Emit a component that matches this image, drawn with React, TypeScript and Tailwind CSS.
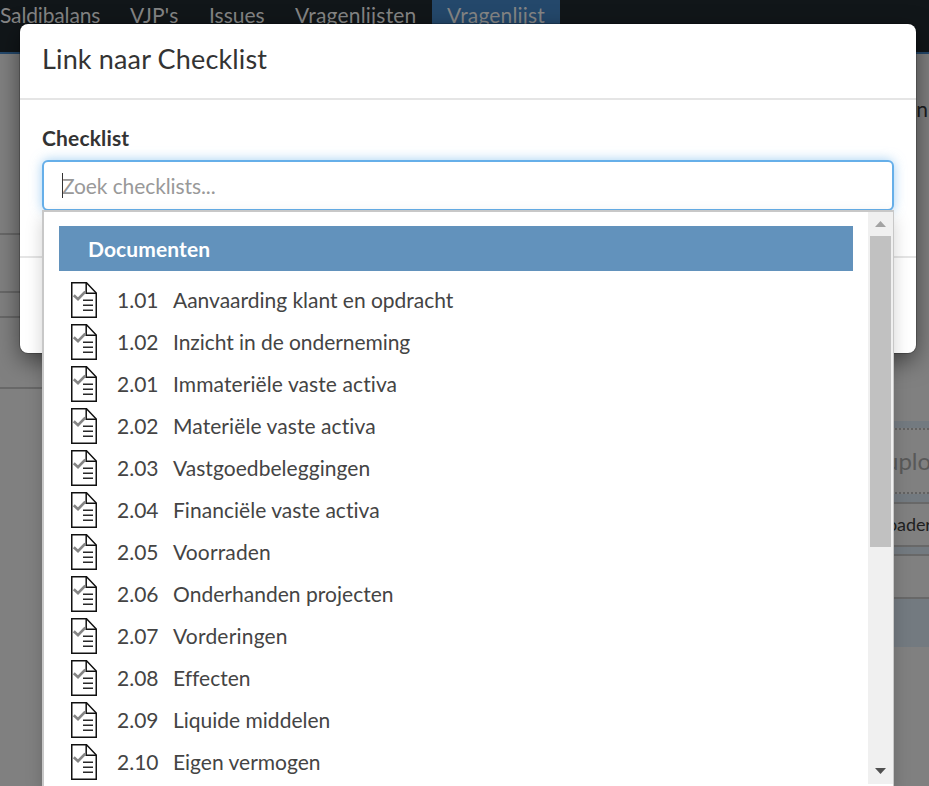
import React from "react";

const documents = [
  { number: "1.01", name: "Aanvaarding klant en opdracht", spacing: "tracking-[-0.02px]" },
  { number: "1.02", name: "Inzicht in de onderneming", spacing: "tracking-[-0.06px]" },
  { number: "2.01", name: "Immateriële vaste activa", spacing: "tracking-[0.09px]" },
  { number: "2.02", name: "Materiële vaste activa", spacing: "tracking-[0.08px]" },
  { number: "2.03", name: "Vastgoedbeleggingen", spacing: "tracking-[0.05px]" },
  { number: "2.04", name: "Financiële vaste activa", spacing: "tracking-[0.03px]" },
  { number: "2.05", name: "Voorraden", spacing: "tracking-[0.15px]" },
  { number: "2.06", name: "Onderhanden projecten", spacing: "tracking-[0.03px]" },
  { number: "2.07", name: "Vorderingen", spacing: "tracking-[0.2px]" },
  { number: "2.08", name: "Effecten", spacing: "tracking-normal" },
  { number: "2.09", name: "Liquide middelen", spacing: "tracking-normal" },
  { number: "2.10", name: "Eigen vermogen", spacing: "tracking-normal" },
];

function DocumentIcon() {
  return (
    <svg width="26" height="36" viewBox="0 0 26 36" fill="none" className="shrink-0">
      <path d="M.75 .75H15.5L25.25 11V35.25H.75Z" stroke="#111" strokeWidth="1.5" />
      <path d="M15.2 1V11.2H25" stroke="#111" strokeWidth="1.5" />
      <path d="M2.8 13.3L7 17.2L14.3 9.6" stroke="#858585" strokeWidth="2.7" />
      <path d="M12 18.3H22M12 23.3H22M12 28.3H22" stroke="#292929" strokeWidth="1.4" />
    </svg>
  );
}

function NavBar() {
  return (
    <nav className="flex h-[54px] items-start border-b-2 border-[#24486b] bg-[#111619] text-[21px] leading-[30px] text-[#858585]">
      <span className="w-[128px] whitespace-nowrap tracking-[-0.15px]">Saldibalans</span>
      <span className="w-[81px] pl-[2px] tracking-[0.2px]">VJP's</span>
      <span className="w-[86px]">Issues</span>
      <span className="w-[137px] tracking-[0.2px]">Vragenlijsten</span>
      <span className="h-[52px] w-[128px] bg-[#24486b] pl-[15px] tracking-[0.15px]">Vragenlijst</span>
    </nav>
  );
}

function Page() {
  return (
    <div className="h-full w-full">
      <NavBar />
      <div className="flex h-[732px] justify-between">
        <div className="w-[100px]">
          <div className="h-[181px] border-b-2 border-[#686868]" />
          <div className="h-[58px] border-b-2 border-[#686868]" />
          <div className="h-[25px] border-b-2 border-[#686868]" />
          <div className="h-[71px] border-b-2 border-[#686868]" />
        </div>
        <div className="w-[49px]">
          <div className="flex h-[367px] justify-end pt-[39px] pr-[1px] text-[21px] leading-8 text-[#1b1c1e]">on</div>
          <div className="h-[226px] bg-[#737a80] pt-[7px]">
            <div className="flex h-[66px] items-center border-y-2 border-dotted border-[#626262] bg-[#808080] pl-[5px] text-[24px] text-[#595959]">uplo</div>
            <div className="mt-[8px] flex h-[45px] items-center border-y-2 border-[#686868] bg-[#808080] pl-[7px] text-[18px] tracking-[-0.1px] text-[#202020]">oader</div>
            <div className="mt-[7px] h-[45px] border-y-2 border-[#686868] bg-[#808080]" />
          </div>
        </div>
      </div>
    </div>
  );
}

function Modal() {
  return (
    <section className="absolute left-5 top-6 h-[329px] w-[896px] rounded-[8px] bg-white shadow-[0_8px_23px_rgba(0,0,0,0.5),0_0_0_1px_rgba(0,0,0,0.2)]">
      <header className="h-[76px] border-b-2 border-[#e5e5e5] px-[22px] pt-[15px] text-[27px] leading-[39px] tracking-[0.15px]">Link naar Checklist</header>
      <div className="h-[158px] border-b-2 border-[#e5e5e5] px-[22px] pt-[23px]">
        <label htmlFor="checklist" className="block h-[37px] text-[21px] font-bold leading-[30px] tracking-[0.15px]">Checklist</label>
        <div className="relative">
          <input
            id="checklist"
            placeholder="Zoek checklists..."
            className="block h-[51px] w-[852px] rounded-[6px] border-2 border-[#66afe9] bg-white px-[18px] text-[21px] tracking-[-0.1px] shadow-[0_0_12px_rgba(102,175,233,0.6)] outline-none placeholder:text-[#999999]"
          />
          <span className="absolute left-[20px] top-[13px] h-[25px] w-px bg-[#333]" />
        </div>
      </div>
    </section>
  );
}

function Dropdown() {
  return (
    <div className="absolute left-[42px] top-[210px] flex h-[576px] w-[852px] border-l-2 border-r border-t-2 border-[#c8c8c8] bg-white shadow-[0_8px_16px_rgba(0,0,0,0.18)]">
      <div className="flex-1 pl-[15px] pr-[15px] pt-[14px]">
        <h2 className="h-[45px] bg-[#6292bc] pl-[29px] text-[21px] font-bold leading-[46px] tracking-[0.1px] text-white">Documenten</h2>
        <ul className="pt-[8px] text-[#444444]">
          {documents.map(({ number, name, spacing }) => (
            <li key={number} className="flex h-[42px] items-center pl-3 text-[21px] leading-[30px]">
              <DocumentIcon />
              <span className="ml-[20px] w-[56px]">{number}</span>
              <span className={spacing}>{name}</span>
            </li>
          ))}
        </ul>
      </div>
      <div className="flex h-[572px] w-[25px] flex-col items-center bg-[#f0f0f0]">
        <svg width="25" height="24" viewBox="0 0 25 24">
          <path d="M7 15L12.5 9L18 15Z" fill="#a3a3a3" />
        </svg>
        <div className="h-[311px] w-[21px] bg-[#c1c1c1]" />
        <svg width="25" height="24" viewBox="0 0 25 24" className="mt-auto">
          <path d="M7 8L12.5 14L18 8Z" fill="#505050" />
        </svg>
      </div>
    </div>
  );
}

export default function App() {
  return (
    <main className="relative h-[786px] w-[929px] overflow-hidden bg-[#808080] font-[Lato,sans-serif] text-[#333333] [font-variant-ligatures:none]">
      <Page />
      <Modal />
      <Dropdown />
    </main>
  );
}
